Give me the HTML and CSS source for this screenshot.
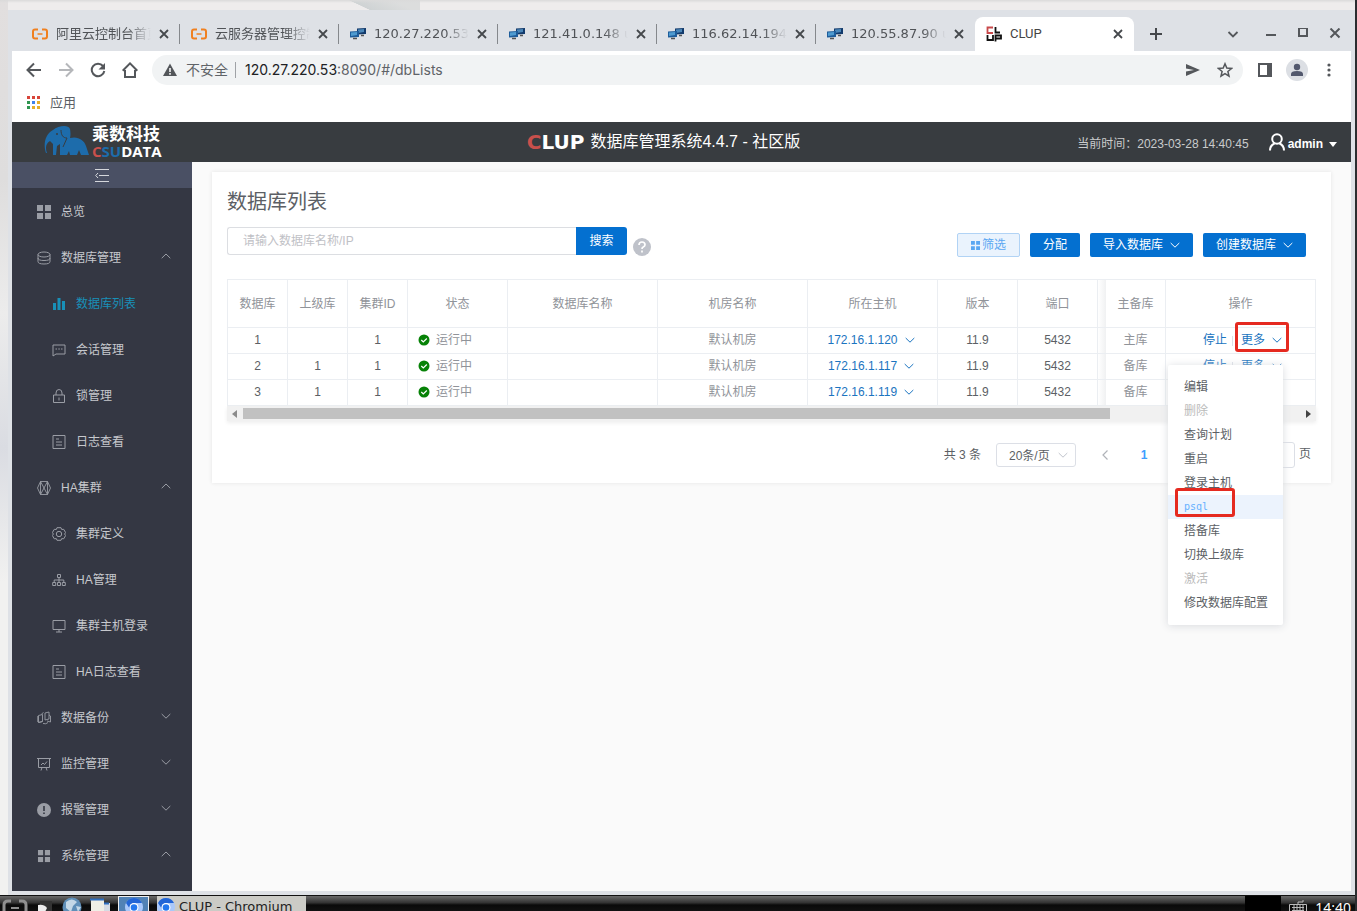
FILE: index.html
```html
<!DOCTYPE html>
<html lang="zh-CN">
<head>
<meta charset="utf-8">
<title>CLUP</title>
<link rel="stylesheet" href="styles.css">
</head>
<body>
<svg class="defs" aria-hidden="true">
  <symbol id="down" viewBox="0 0 10 10"><path d="M.7 3 5 7.2 9.3 3" fill="none" stroke="currentColor"/></symbol>
  <symbol id="up" viewBox="0 0 10 10"><path d="M.7 7.2 5 3l4.300 4.200" fill="none" stroke="currentColor"/></symbol>
  <symbol id="x" viewBox="0 0 10 10"><path d="M1 1l8 8M9 1 1 9" fill="none" stroke="currentColor" stroke-width="1.800"/></symbol>
  <symbol id="ali" viewBox="0 0 16 16"><path d="M6 3.500H3Q1 3.500 1 5.500v5q0 2 2 2h3M10 3.500h3q2 0 2 2v5q0 2-2 2h-3" fill="none" stroke="#f08020" stroke-width="2"/><path d="M5.500 8h5" stroke="#f08020" stroke-width="1.500"/></symbol>
  <symbol id="putty" viewBox="0 0 16 16"><path d="M7 2.500l9-.5v6l-9 .5z" fill="#123a6c"/><path d="M8 3.500l6-.5v3l-6 1z" fill="#4a86b8"/><path d="M0 5.500l9-.5v6l-9 .5z" fill="#1e5d9b"/><path d="M1 6.500l6-.5v3l-6 1z" fill="#4f9bd0"/><path d="M3 12.500h4M11 9.500h3" stroke="#555" stroke-width="1.500"/></symbol>
  <symbol id="grid" viewBox="0 0 14 14"><path d="M0 0h6v6H0zM8 0h6v6H8zM0 8h6v6H0zM8 8h6v6H8z" fill="currentColor"/></symbol>
  <symbol id="log" viewBox="0 0 14 14"><path d="M1 .5h12v13H1zM4 4h3M4 7h6M4 10h6" fill="none" stroke="currentColor"/></symbol>
  <symbol id="ok" viewBox="0 0 12 12"><circle cx="6" cy="6" r="5.500" fill="#078207"/><path d="M3.300 6l2 2 3.500-3.500" fill="none" stroke="#fff" stroke-width="1.200"/></symbol>
  <symbol id="chromium" viewBox="0 0 18 18"><circle cx="9" cy="9" r="9" fill="#a9c8fa"/><path d="M1 5A9 9 0 0 1 17 5H9a4.500 4.500 0 0 0-4 6z" fill="#2265d6"/><circle cx="9" cy="9.500" r="4.500" fill="#fff"/><circle cx="9" cy="9.500" r="3.300" fill="#2377ee"/></symbol>
</svg>

<div class="desktop">
<div class="window">
  <div class="tabs">
    <div class="tab"><svg class="fav"><use href="#ali"/></svg><span class="tab-name">阿里云控制台首页</span><button class="close" aria-label="关闭"><svg><use href="#x"/></svg></button></div>
    <div class="tab"><svg class="fav"><use href="#ali"/></svg><span class="tab-name">云服务器管理控制台</span><button class="close" aria-label="关闭"><svg><use href="#x"/></svg></button></div>
    <div class="tab"><svg class="fav"><use href="#putty"/></svg><span class="tab-name">120.27.220.53</span><button class="close" aria-label="关闭"><svg><use href="#x"/></svg></button></div>
    <div class="tab"><svg class="fav"><use href="#putty"/></svg><span class="tab-name">121.41.0.148 u</span><button class="close" aria-label="关闭"><svg><use href="#x"/></svg></button></div>
    <div class="tab"><svg class="fav"><use href="#putty"/></svg><span class="tab-name">116.62.14.194</span><button class="close" aria-label="关闭"><svg><use href="#x"/></svg></button></div>
    <div class="tab last"><svg class="fav"><use href="#putty"/></svg><span class="tab-name">120.55.87.90 u</span><button class="close" aria-label="关闭"><svg><use href="#x"/></svg></button></div>
    <div class="tab active"><svg class="fav" viewBox="0 0 16 16" fill="none" stroke-width="1.800"><path d="M7 1.500H1.500V7H7" stroke="#c8494b"/><path d="M9.500 1v5.500H14M1.500 9v5H7V9M9.500 15.500V9.500H15v3H10" stroke="#111"/></svg><span class="tab-name">CLUP</span><button class="close" aria-label="关闭"><svg><use href="#x"/></svg></button></div>
    <button class="plain plus" aria-label="新标签页"><svg width="12" height="12" viewBox="0 0 12 12"><path d="M6 0v12M0 6h12" stroke="currentColor" stroke-width="2"/></svg></button>
    <div class="wctl">
      <button class="plain find" aria-label="搜索标签页"><svg width="12" height="12" viewBox="0 0 12 12"><path d="M1.500 4 6 8.500 10.500 4" fill="none" stroke="currentColor" stroke-width="1.800"/></svg></button>
      <button class="plain" aria-label="最小化"><svg width="12" height="12" viewBox="0 0 12 12"><path d="M1 7h10" stroke="currentColor" stroke-width="2"/></svg></button>
      <button class="plain" aria-label="最大化"><svg width="12" height="12" viewBox="0 0 12 12"><path d="M2-1h8v8H2z" fill="none" stroke="currentColor" stroke-width="2" transform="translate(0 1)"/></svg></button>
      <button class="plain" aria-label="关闭窗口"><svg width="12" height="12" viewBox="0 0 12 12"><path d="M1.500.5l9 9M10.500.5l-9 9" stroke="currentColor" stroke-width="2"/></svg></button>
    </div>
  </div>

  <div class="toolbar">
    <button class="plain" aria-label="后退"><svg width="16" height="16" viewBox="0 0 16 16"><path d="M15 8H2M8 1.500 1.500 8 8 14.500" fill="none" stroke="currentColor" stroke-width="2"/></svg></button>
    <button class="plain off" aria-label="前进"><svg width="16" height="16" viewBox="0 0 16 16"><path d="M1 8h13M8 1.500 14.500 8 8 14.500" fill="none" stroke="currentColor" stroke-width="2"/></svg></button>
    <button class="plain" aria-label="刷新"><svg width="16" height="16" viewBox="0 0 16 16"><path d="M13 4a6.300 6.300 0 1 0 1.300 5" fill="none" stroke="currentColor" stroke-width="2"/><path d="M15 1v6.500H8.500z" fill="currentColor"/></svg></button>
    <button class="plain" aria-label="主页"><svg width="16" height="16" viewBox="0 0 16 16"><path d="M3 8v7h10V8M.7 8.700 8 1.400l7.300 7.300" fill="none" stroke="currentColor" stroke-width="2"/></svg></button>
    <div class="omnibox">
      <svg width="14" height="14" viewBox="0 0 14 14"><path d="M7 .5 14 13H0z" fill="#53565a"/><path d="M7 5v4M7 10v1.700" stroke="#fff" stroke-width="1.500"/></svg>
      <span class="unsafe">不安全</span>
      <span class="url"><b>120.27.220.53</b>:8090/#/dbLists</span>
      <button class="plain" aria-label="发送"><svg width="14" height="14" viewBox="0 0 14 14"><path d="M0 1l14 6-14 6V8.500L8 7 0 5.500z" fill="currentColor"/></svg></button>
      <button class="plain" aria-label="收藏"><svg width="16" height="16" viewBox="0 0 16 16"><path d="M8 1.800l1.800 4.300 4.700.4-3.600 3 1.100 4.600-4-2.500-4 2.500 1.100-4.600-3.600-3 4.700-.4z" fill="none" stroke="currentColor" stroke-width="1.500"/></svg></button>
    </div>
    <button class="plain" aria-label="侧边栏"><svg width="14" height="14" viewBox="0 0 14 14"><path d="M1 1h12v12H1z" fill="none" stroke="currentColor" stroke-width="2"/><path d="M9 1h4v12H9z" fill="currentColor"/></svg></button>
    <button class="plain" aria-label="用户"><svg width="22" height="22" viewBox="0 0 22 22"><circle cx="11" cy="11" r="11" fill="#dcdfe4"/><circle cx="11" cy="8" r="3.200" fill="#52586d"/><path d="M5 17v-2q0-3 6-3t6 3v2z" fill="#52586d"/></svg></button>
    <button class="plain" aria-label="菜单"><svg width="16" height="16" viewBox="0 0 16 16" fill="currentColor"><circle cx="8" cy="3" r="1.600"/><circle cx="8" cy="8" r="1.600"/><circle cx="8" cy="13" r="1.600"/></svg></button>
  </div>

  <div class="bookmarks">
    <svg width="13" height="13" viewBox="0 0 13 13"><path d="M0 0h3v3H0zM5 0h3v3H5zM10 0h3v3h-3z" fill="#d8453a"/><path d="M0 5h3v3H0zM0 10h3v3H0z" fill="#2f9550"/><path d="M5 5h3v3H5z" fill="#3f82ea"/><path d="M10 5h3v3h-3zM5 10h3v3H5zM10 10h3v3h-3z" fill="#e6ae2a"/></svg>
    <a href="#">应用</a>
  </div>

  <header class="app-head">
    <div class="logo">
      <svg width="46" height="32" viewBox="0 0 46 32"><path d="M2 28C-1 20 1 9 9 5 14 1 24-1 26 4q1 5 0 9c8-2 14 2 16 8l3 9h-8l-2-5-2 5h-7l-1-4-2 4h-7V19l-3 2-1 9h-3V19l-3-3c-4 2-5 7-3 12z" fill="#1d6cab"/><path d="M17 5c0 5 2 8 6 8l-4 9" fill="none" stroke="#383c40"/><circle cx="13" cy="9" r="1" fill="#383c40"/></svg>
      <div class="logo-text"><span class="cn">乘数科技</span><span class="en"><i class="r">C</i><i class="b">SU</i>DATA</span></div>
    </div>
    <h1><span class="brand"><i class="r">C</i>LUP</span>数据库管理系统4.4.7 - 社区版</h1>
    <div class="user">
      <span class="now">当前时间：2023-03-28 14:40:45</span>
      <button class="account"><svg width="16" height="18" viewBox="0 0 16 18"><circle cx="8" cy="6" r="4.800" fill="none" stroke="#fff" stroke-width="2"/><path d="M1 17.500q0-5 4.500-7M15 17.500q0-5-4.500-7" fill="none" stroke="#fff" stroke-width="2"/></svg>admin<svg class="caret" width="8" height="5" viewBox="0 0 8 5"><path d="M0 0h8L4 5z" fill="#fff"/></svg></button>
    </div>
  </header>

  <div class="app">
    <nav class="side">
      <button class="fold" aria-label="折叠菜单"><svg width="14" height="13" viewBox="0 0 14 13"><path d="M0 .5h14M4 6.500h10M0 12.500h14M3 4 .7 6.500 3 9" fill="none" stroke="#d5d7dc"/></svg></button>
      <a href="#"><svg><use href="#grid"/></svg>总览</a>
      <a href="#"><svg viewBox="0 0 14 14" fill="none" stroke="currentColor"><ellipse cx="7" cy="3.500" rx="6" ry="2.500"/><path d="M1 3.500v7q0 2.500 6 2.500t6-2.500v-7M1 7q0 2.500 6 2.500T13 7"/></svg>数据库管理<svg class="arrow"><use href="#up"/></svg></a>
      <a href="#" class="sub on"><svg viewBox="0 0 14 14" fill="currentColor"><path d="M1 6h3v7H1zM5.500 1h3v12h-3zM10 4h3v9h-3z"/></svg>数据库列表</a>
      <a href="#" class="sub"><svg viewBox="0 0 14 14" fill="none" stroke="currentColor"><path d="M1 2h12v9H4l-3 2zM3.500 6h1.500M6.300 6h1.500M9 6h1.500"/></svg>会话管理</a>
      <a href="#" class="sub"><svg viewBox="0 0 14 14" fill="none" stroke="currentColor"><path d="M1.500 6h11v7.500h-11zM4 6V4q0-3.500 3-3.500T10 4v2M7 8.500v3"/></svg>锁管理</a>
      <a href="#" class="sub"><svg><use href="#log"/></svg>日志查看</a>
      <a href="#"><svg viewBox="0 0 14 14" fill="none" stroke="currentColor" stroke-width=".9"><path d="M3.500.5h7L13.500 7l-3 6.500h-7L.5 7zM3.500.5v13M10.500.5v13M3.500.5l7 13M10.500.5l-7 13"/></svg>HA集群<svg class="arrow"><use href="#up"/></svg></a>
      <a href="#" class="sub"><svg viewBox="0 0 14 14" fill="none" stroke="currentColor"><path d="M5 .7h4l.7 1.800 2-.2 2 3.400L12.500 7l1.200 1.400-2 3.400-2-.2L9 13.300H5l-.7-1.700-2 .2-2-3.400L1.500 7 .3 5.700l2-3.400 2 .2z"/><circle cx="7" cy="7" r="2.700"/></svg>集群定义</a>
      <a href="#" class="sub"><svg viewBox="0 0 14 14" fill="none" stroke="currentColor"><path d="M5.500 1.500h3v3h-3zM.7 9.500h3v3h-3zM5.500 9.500h3v3h-3zM10.300 9.500h3v3h-3zM7 4.500v5M2.200 9.500V7h9.600v2.500"/></svg>HA管理</a>
      <a href="#" class="sub"><svg viewBox="0 0 14 14" fill="none" stroke="currentColor"><path d="M1 1.500h12v9H1zM7 10.500v2.500M4 13h6"/></svg>集群主机登录</a>
      <a href="#" class="sub"><svg><use href="#log"/></svg>HA日志查看</a>
      <a href="#"><svg viewBox="0 0 14 14" fill="none" stroke="currentColor" stroke-width=".9"><path d="M1.500 4.500l4-1v7l-4 1zM8 2l4-1v7l-4 1zM1.500 11.500l4-1M.8 5v6M12 4l1.500 1v6L10 10M6 12.500q3 1 5-1M4.500 3l2-1.500"/></svg>数据备份<svg class="arrow"><use href="#down"/></svg></a>
      <a href="#"><svg viewBox="0 0 14 14" fill="none" stroke="currentColor"><path d="M0 1.500h14M1.500 1.500v9h11v-9M4 8l2-2 1.500 1.500L10 4.500M5 10.500l-1 3M9 10.500l1 3"/></svg>监控管理<svg class="arrow"><use href="#down"/></svg></a>
      <a href="#"><svg viewBox="0 0 14 14"><circle cx="7" cy="7" r="7" fill="currentColor"/><path d="M7 3v5M7 9.500V11" stroke="#343743" stroke-width="1.600"/></svg>报警管理<svg class="arrow"><use href="#down"/></svg></a>
      <a href="#"><svg viewBox="-1 -1 16 16"><use href="#grid" width="14" height="14"/></svg>系统管理<svg class="arrow"><use href="#up"/></svg></a>
    </nav>

    <main>
      <section class="card">
        <h2>数据库列表</h2>
        <div class="tools">
          <form class="search"><input type="text" aria-label="搜索" placeholder="请输入数据库名称/IP"><button type="button">搜索</button></form>
          <svg class="help" width="18" height="18" viewBox="0 0 18 18"><circle cx="9" cy="9" r="9" fill="#bfc2ca"/><path d="M6 7q0-3 3-3t3 2.800q0 1.500-1.700 2.200Q9 9.600 9 11M9 12.500v2" fill="none" stroke="#fff" stroke-width="1.700"/></svg>
          <div class="actions">
            <button class="btn light"><svg width="9" height="9"><use href="#grid"/></svg>筛选</button>
            <button class="btn">分配</button>
            <button class="btn">导入数据库<svg class="chev"><use href="#down"/></svg></button>
            <button class="btn">创建数据库<svg class="chev"><use href="#down"/></svg></button>
          </div>
        </div>

        <div class="grid">
        <table>
          <colgroup><col class="w60"><col class="w60"><col class="w60"><col class="w100"><col><col class="w150"><col class="w130"><col class="w80"><col class="w80"><col class="w8"><col class="w60"><col class="w150"></colgroup>
          <thead><tr><th>数据库</th><th>上级库</th><th>集群ID</th><th>状态</th><th>数据库名称</th><th>机房名称</th><th>所在主机</th><th>版本</th><th>端口</th><td class="edge"></td><th>主备库</th><th>操作</th></tr></thead>
          <tbody>
            <tr><td>1</td><td></td><td>1</td><td class="state"><svg><use href="#ok"/></svg>运行中</td><td></td><td class="dim">默认机房</td><td class="host"><a href="#">172.16.1.120<svg class="chev"><use href="#down"/></svg></a></td><td>11.9</td><td>5432</td><td class="edge"></td><td class="dim">主库</td><td><div class="ops"><a href="#">停止</a><span class="more marked"><a href="#">更多<svg class="chev"><use href="#down"/></svg></a>
              <ul class="menu"><li>编辑</li><li class="no">删除</li><li>查询计划</li><li>重启</li><li>登录主机</li><li class="hot"><span>psql</span></li><li>搭备库</li><li>切换上级库</li><li class="no">激活</li><li>修改数据库配置</li></ul></span></div></td></tr>
            <tr><td>2</td><td>1</td><td>1</td><td class="state"><svg><use href="#ok"/></svg>运行中</td><td></td><td class="dim">默认机房</td><td class="host"><a href="#">172.16.1.117<svg class="chev"><use href="#down"/></svg></a></td><td>11.9</td><td>5432</td><td class="edge"></td><td class="dim">备库</td><td><div class="ops"><a href="#">停止</a><span class="more"><a href="#">更多<svg class="chev"><use href="#down"/></svg></a></span></div></td></tr>
            <tr><td>3</td><td>1</td><td>1</td><td class="state"><svg><use href="#ok"/></svg>运行中</td><td></td><td class="dim">默认机房</td><td class="host"><a href="#">172.16.1.119<svg class="chev"><use href="#down"/></svg></a></td><td>11.9</td><td>5432</td><td class="edge"></td><td class="dim">备库</td><td></td></tr>
          </tbody>
        </table>
        <div class="scroll"><svg width="5" height="8" viewBox="0 0 5 8"><path d="M5 0v8L0 4z" fill="#8b8b8b"/></svg><div class="track"><div class="thumb"></div></div><svg width="5" height="8" viewBox="0 0 5 8"><path d="M0 0v8l5-4z" fill="#444"/></svg></div>
        </div>

        <div class="pager">
          <span>共 3 条</span>
          <span class="size"><select aria-label="每页条数"><option>20条/页</option></select><svg class="chev"><use href="#down"/></svg></span>
          <button class="pg" aria-label="上一页"><svg width="8" height="10" viewBox="0 0 8 10"><path d="M6.500.5 2 5l4.500 4.500" fill="none" stroke="currentColor" stroke-width="1.200"/></svg></button>
          <button class="pg cur">1</button>
          <label class="jump"><input type="text" aria-label="页码">页</label>
        </div>
      </section>
    </main>
  </div>
</div>
</div>

<footer class="taskbar">
  <svg width="26" height="16" viewBox="0 0 26 16"><path d="M9 5H6Q2 5 2 9v8M17 5h3q4 0 4 4v8" fill="none" stroke="#8f8f8f" stroke-width="3"/><path d="M9 12h8" stroke="#8f8f8f" stroke-width="2"/></svg>
  <svg width="18" height="16" viewBox="0 0 18 16"><path d="M4 5h12v11H4z" fill="#333"/><path d="M2 16V9q6-1 9 3l-2 4z" fill="#eee"/></svg>
  <svg width="20" height="16" viewBox="0 0 20 16"><circle cx="10" cy="11" r="9.500" fill="#5f8fb8"/><path d="M4 6q6-5 11 0l-4 4-2 6-5-4zM14 10l5 1-3 5z" fill="#c4d8e7"/></svg>
  <svg width="20" height="16" viewBox="0 0 20 16"><path d="M6 7h14v10H6z" fill="#d5dbe4"/><path d="M1 4h13v13H1z" fill="#f0efe6"/><path d="M0 3.500h14M14 7.500h5" stroke="#2f6fc0" stroke-width="2"/></svg>
  <span class="launch"><svg width="18" height="18"><use href="#chromium"/></svg></span>
  <button class="task"><svg width="18" height="18"><use href="#chromium"/></svg>CLUP - Chromium</button>
  <span class="tray"></span>
  <svg width="18" height="16" viewBox="0 0 18 16" fill="none" stroke="#bbb"><path d="M.5 17V8.500h17V17M9 8V6h5V4M3 11.500h12M3 14.500h12M5 9v7M8 9v7M11 9v7M14 9v7"/></svg>
  <span class="clock">14:40</span>
</footer>
</body>
</html>
```

FILE: styles.css
```css
*, *::after { box-sizing: border-box; }
body {
  margin: 0; min-height: 100vh; display: flex; flex-direction: column;
  font: 12px/24px "Liberation Sans", "Noto Sans CJK SC", sans-serif;
  color: #5c5f65; background: #2b2d30;
}
button, input, select { font: inherit; color: inherit; margin: 0; padding: 0; border: 0; background: none; }
a { color: inherit; text-decoration: none; }
i { font-style: normal; }
svg { flex: none; display: block; }
.defs { display: none; }

/* desktop and window frame */
.desktop {
  flex: 1; display: flex; margin-right: 2px; padding: 10px 0 0 8px;
  background:
    linear-gradient(#dadada, transparent 3px),
    linear-gradient(25deg, transparent 49%, #cfd3d4 50%, #dcdddd 80%) 300px 0 / 120px 10px no-repeat,
    linear-gradient(#e2dfdf 0, #dedddd 20%, #ececec 35%, #dadce2 50%, #f1f1f0 65%, #f1f1f0 100%) 0 0 / 8px 100% no-repeat,
    #eeecec;
}
.window { flex: 1; min-width: 0; display: flex; flex-direction: column; border: 4px solid #dee1e6; border-top: 0; }
.plain { display: grid; place-items: center; width: 32px; height: 32px; color: #54575b; }
.off { color: #b5b7ba; }

.tabs { display: flex; align-items: center; height: 41px; padding: 7px 0 0 9px; background: #dee1e6; }
.tab {
  flex: 0 1 159px; min-width: 0; display: flex; align-items: center; height: 34px; padding: 0 11px;
  font: 13px/20px "DejaVu Sans", "Noto Sans CJK SC", sans-serif; color: #505357;
  background: linear-gradient(#85888c, #85888c) right 7px / 1px 20px no-repeat;
}
.tab.last { background: none; }
.tab.active { background: #fff; border-radius: 8px 8px 0 0; font-family: Roboto, sans-serif; color: #444; }
.fav { width: 16px; height: 16px; margin-right: 8px; }
.tab-name {
  flex: 1; overflow: hidden; white-space: nowrap;
  -webkit-mask-image: linear-gradient(90deg, #000 75%, transparent);
  mask-image: linear-gradient(90deg, #000 75%, transparent);
}
.active .tab-name { -webkit-mask-image: none; mask-image: none; }
.close { margin-left: 8px; color: #45484c; }
.close svg { width: 10px; height: 10px; }
.plus { width: 44px; color: #45484c; }
.wctl { margin-left: auto; display: flex; }
.find { margin-right: 6px; }

.toolbar { display: flex; align-items: center; height: 38px; padding: 0 6px; background: #fff; }
.omnibox {
  flex: 1; display: flex; align-items: center; height: 30px; margin: 0 6px; padding: 0 2px 0 11px;
  border-radius: 15px; background: #f1f3f4; font: 14px/20px Inter, "Noto Sans CJK SC", sans-serif; color: #5f6368;
}
.unsafe { margin-left: 9px; padding-right: 7px; border-right: 1px solid #9fa2a6; line-height: 16px; }
.url { flex: 1; margin-left: 9px; }
.url b { font-weight: 400; color: #202124; }
.bookmarks { display: flex; align-items: center; gap: 10px; height: 33px; padding: 0 15px 6px; background: #fff; font-size: 13px; }

/* application header */
.app-head { display: grid; grid-template-columns: 1fr auto 1fr; align-items: center; height: 40px; background: #383c40; color: #fff; }
.logo { display: flex; gap: 2px; padding-left: 32px; }
.logo-text { display: flex; flex-direction: column; }
.cn { font-weight: 700; font-size: 17px; line-height: 19px; }
.en { font: 700 15px/15px "Open Sans", sans-serif; }
.r { color: #c9504c; }
.b { color: #1d6cab; }
.app-head h1 { display: flex; align-items: center; gap: 6px; margin: 0; padding-right: 36px; font-size: 16px; font-weight: 400; }
.brand { font: 700 20px/24px "DejaVu Sans", sans-serif; }
.user { display: flex; justify-content: flex-end; align-items: center; gap: 20px; padding: 3px 14px 0 0; color: #c9cbcc; }
.now { font-family: "Liberation Sans", "Noto Sans CJK TC", sans-serif; }
.account { display: flex; align-items: center; gap: 3px; color: #fff; font-weight: 700; }
.account svg { margin-top: -4px; }
.account .caret { margin: 2px 0 0 3px; }

.app { flex: 1; display: flex; }
.side { width: 180px; flex: none; background: #343743; color: #c6c8cd; }
.fold { display: grid; place-items: center; width: 100%; height: 26px; margin-bottom: 1px; background: #4a5064; }
.side a { display: flex; align-items: center; gap: 10px; height: 46px; padding: 0 21px 0 25px; }
.side a svg { width: 14px; height: 14px; color: #9a9da5; }
.side .sub { padding-left: 40px; }
.side .on, .side .on svg { color: #1890b8; }
.side a .arrow { width: 10px; height: 10px; margin-left: auto; margin-top: -4px; }

/* list card */
main { flex: 1; min-width: 0; padding: 10px 20px; background: #fafafa; }
.card { padding: 15px; background: #fff; box-shadow: 0 0 4px #e4e4e4; }
.card h2 { margin: 0 0 10px; font-size: 20px; line-height: 30px; font-weight: 400; }
.tools { display: flex; align-items: flex-end; height: 30px; margin-bottom: 22px; }
.search { display: flex; width: 400px; height: 28px; align-self: flex-start; }
.search input { flex: 1; min-width: 0; padding: 0 15px; border: 1px solid #dcdee2; border-right: 0; border-radius: 3px 0 0 3px; }
.search input::placeholder { color: #bfc1c6; }
.search button { width: 51px; border-radius: 0 3px 3px 0; background: #0470d0; color: #fff; }
.help { margin: 0 0 1px 6px; }
.actions { display: flex; gap: 10px; margin: 0 10px 0 auto; }
.btn { display: flex; align-items: center; height: 24px; padding: 0 13px; border-radius: 2px; background: #0470d0; color: #fff; white-space: nowrap; }
.btn .chev { margin-left: 7px; }
.light { gap: 2px; border: 1px solid #b1d3f5; background: #eaf3fd; color: #5aa7f2; }
.chev { width: 10px; height: 10px; }

table { width: 100%; table-layout: fixed; border-collapse: separate; border-spacing: 0; border: 1px solid #ebeef2; border-width: 1px 0 0 1px; }
.w8 { width: 8px; } .w60 { width: 60px; } .w80 { width: 80px; } .w100 { width: 100px; } .w130 { width: 130px; } .w150 { width: 150px; }
th, td { height: 26px; padding: 0; border: 1px solid #ebeef2; border-width: 0 1px 1px 0; text-align: center; vertical-align: top; line-height: 24px; }
th { height: 48px; font-weight: 400; color: #909399; vertical-align: middle; }
td.edge { border-right: 0; background: linear-gradient(90deg, #fff, #f0f1f2); }
.dim { color: #909399; }
td a { display: inline-flex; align-items: center; gap: 7px; color: #1b74c0; vertical-align: top; }
td.host { padding-right: 3px; }
td.state { color: #909399; text-align: left; padding-left: 10px; }
.state svg { display: inline-block; width: 12px; height: 12px; margin-right: 6px; vertical-align: -2px; }
.ops { display: flex; justify-content: center; gap: 5px; height: 24px; padding-left: 4px; }
.more { position: relative; padding-left: 9px; background: linear-gradient(#dcdfe6, #dcdfe6) 0 8px / 1px 10px no-repeat; }
.marked::after, .hot span::after { content: ""; position: absolute; border: 3px solid #e52a20; border-radius: 3px; }
.marked::after { inset: -6px -7px 0 3px; }
.menu {
  position: absolute; z-index: 2; top: 37px; right: -1px; width: 115px; margin: 0; padding: 10px 0; list-style: none;
  text-align: left; background: #fff; border-radius: 2px; box-shadow: 0 1px 8px #d9dbdf;
}
.menu li { padding-left: 16px; white-space: nowrap; }
.menu .no { color: #bbb; }
.menu .hot { background: #ecf3fd; color: #66b1ff; font: 10px/24px "DejaVu Sans Mono", monospace; }
.hot span { position: relative; display: block; }
.hot span::after { top: -7px; left: -9px; width: 60px; height: 29px; }

.scroll { display: flex; align-items: center; gap: 6px; height: 15px; padding: 0 5px; background: #f1f1f1; box-shadow: 0 2px 4px #eee; }
.track { flex: 1; height: 11px; }
.thumb { width: 82%; height: 100%; background: #c1c1c1; }

.pager { display: flex; align-items: center; justify-content: flex-end; margin-top: 21px; padding-right: 5px; }
.size { position: relative; width: 80px; height: 24px; margin: 0 14px 0 15px; }
.size select { width: 100%; height: 100%; padding-left: 12px; appearance: none; border: 1px solid #dcdfe6; border-radius: 3px; background: #fff; }
.size .chev { position: absolute; right: 8px; top: 7px; color: #c0c4cc; }
.pg { display: grid; place-items: center; width: 30px; height: 24px; margin-right: 9px; color: #b0b3b9; }
.cur { font-weight: 700; color: #409eff; }
.jump { display: flex; gap: 4px; margin-left: 81px; }
.jump input { width: 46px; border: 1px solid #dcdfe6; border-radius: 3px; }

/* desktop task bar */
.taskbar {
  display: flex; height: 16px; overflow: hidden; margin-right: 2px; padding: 0 4px 0 2px; border-top: 1px solid #111;
  background: linear-gradient(#6a6a6a, #333 45%, #0a0a0a 60%, #111);
  font: 13px/22px "DejaVu Sans", sans-serif; color: #222; gap: 8px;
}
.launch { display: grid; place-items: center; width: 31px; height: 22px; border: 1px solid #eee; background: #5182b5; }
.task { display: flex; align-items: center; gap: 4px; width: 149px; height: 22px; margin-right: auto; background: #cbcbc6; white-space: nowrap; }
.tray { width: 36px; background: #000; }
.clock { color: #fff; font: 14px/24px "Noto Sans", sans-serif; }
```
